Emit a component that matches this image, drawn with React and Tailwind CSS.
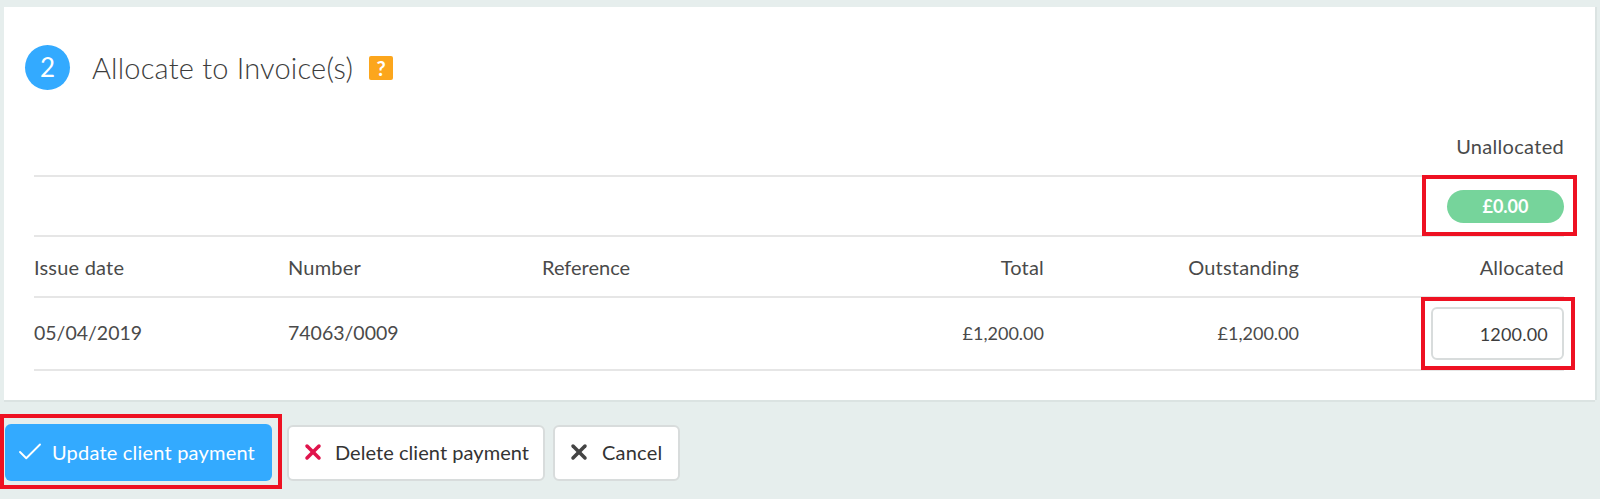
import React from 'react';
import { Check, X } from 'lucide-react';

const ROW = 'grid grid-cols-[254px_254px_254px_248px_255px_265px] items-center text-[20px] tracking-[0.2px] text-[#4a4a4a]';

const RedBox = ({ className }) => (
  <div className={`absolute border-[4px] border-[#ee1122] pointer-events-none ${className}`} />
);

export default function App() {
  return (
    <div className="relative h-[499px] overflow-hidden bg-[#e6eeed] pt-[7px] pl-[4px] pr-[5px] font-['Lato',sans-serif]">
      {/* Panel */}
      <div className="h-[393px] bg-white pt-[38px] pl-[30px] pr-[31px] shadow-[0_2px_0_#dbe3e2,2px_0_0_#dbe3e2]">
        <div className="-ml-[9px] flex items-center h-[45px]">
          <div className="w-[45px] h-[45px] rounded-full bg-[#33aaff] flex items-center justify-center text-white text-[26px]">2</div>
          <h2 className="ml-[22px] text-[29px] tracking-[0.2px] font-light text-[#3d3d3d]">Allocate to Invoice(s)</h2>
          <span className="ml-[16px] w-[24px] h-[24px] rounded-[2px] bg-[#fca61c] flex items-center justify-center text-white text-[20px] font-bold">?</span>
        </div>

        <div className="mt-[35px] h-[52px] flex items-center justify-end border-b-2 border-[#e6e6e6] pb-[8px] text-[20px] tracking-[0.3px] text-[#4a4a4a]">
          Unallocated
        </div>
        <div className="h-[60px] flex items-center justify-end border-b-2 border-[#e6e6e6]">
          <span className="w-[117px] h-[33px] rounded-full bg-[#76d49b] flex items-center justify-center text-white text-[18px] font-bold">£0.00</span>
        </div>
        <div className={`${ROW} h-[61px] border-b-2 border-[#e6e6e6]`}>
          <span>Issue date</span>
          <span>Number</span>
          <span className="tracking-normal">Reference</span>
          <span className="text-right">Total</span>
          <span className="text-right">Outstanding</span>
          <span className="text-right">Allocated</span>
        </div>
        <div className={`${ROW} h-[73px] border-b-2 border-[#e6e6e6]`}>
          <span className="text-[19.5px] tracking-normal pb-[2px]">05/04/2019</span>
          <span className="text-[19.5px] tracking-normal pb-[2px]">74063/0009</span>
          <span />
          <span className="text-right text-[18px] tracking-normal">£1,200.00</span>
          <span className="text-right text-[18px] tracking-normal">£1,200.00</span>
          <div className="flex justify-end">
            <input
              readOnly
              value="1200.00"
              className="w-[133px] h-[53px] rounded-[6px] border-2 border-[#d8dcdc] bg-white pr-[14px] text-right text-[18px] text-[#3d3d3d] outline-none"
            />
          </div>
        </div>
      </div>

      {/* Actions */}
      <div className="mt-[24px] ml-[1px] flex items-center text-[20px] tracking-[0.2px]">
        <button className="w-[267px] h-[57px] rounded-[6px] bg-[#33aaff] text-white flex items-center pl-[10px] pb-[2px]">
          <Check className="w-[30px] h-[30px]" strokeWidth={1.5} />
          <span className="ml-[7px]">Update client payment</span>
        </button>
        <button className="ml-[15px] w-[258px] h-[56px] rounded-[6px] bg-white border-2 border-[#d8dcdc] text-[#333] flex items-center pl-[12px] pb-[2px]">
          <X className="w-[24px] h-[24px] text-[#e0144c]" strokeWidth={3.5} />
          <span className="ml-[10px] tracking-[0.05px]">Delete client payment</span>
        </button>
        <button className="ml-[8px] w-[127px] h-[56px] rounded-[6px] bg-white border-2 border-[#d8dcdc] text-[#333] flex items-center pl-[12px] pb-[2px]">
          <X className="w-[24px] h-[24px] text-[#444]" strokeWidth={3.5} />
          <span className="ml-[11px]">Cancel</span>
        </button>
      </div>

      <RedBox className="left-[1422px] top-[175px] w-[155px] h-[61px]" />
      <RedBox className="left-[1421px] top-[297px] w-[154px] h-[73px]" />
      <RedBox className="left-0 top-[414px] w-[282px] h-[75px]" />
    </div>
  );
}
